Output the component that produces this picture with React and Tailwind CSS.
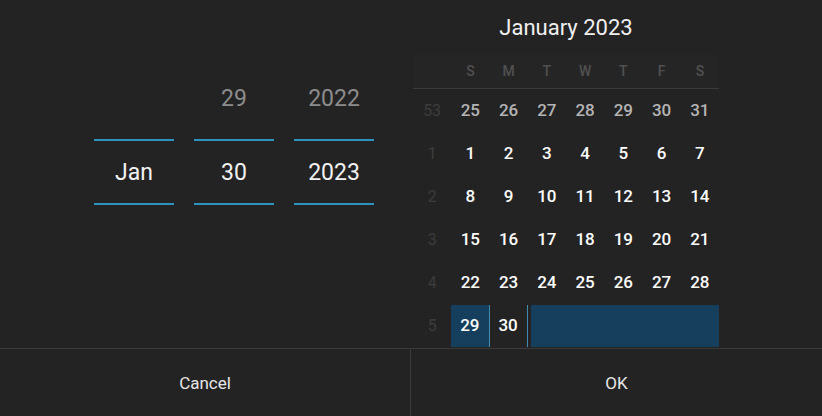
import React from "react";

const pickers = [
  { prev: "", value: "Jan" },
  { prev: "29", value: "30" },
  { prev: "2022", value: "2023" },
];

const weekDays = ["S", "M", "T", "W", "T", "F", "S"];

// each week: [week number, days...]; "muted" marks days of the previous month
const weeks = [
  { num: "53", days: ["25", "26", "27", "28", "29", "30", "31"], muted: true },
  { num: "1", days: ["1", "2", "3", "4", "5", "6", "7"] },
  { num: "2", days: ["8", "9", "10", "11", "12", "13", "14"] },
  { num: "3", days: ["15", "16", "17", "18", "19", "20", "21"] },
  { num: "4", days: ["22", "23", "24", "25", "26", "27", "28"] },
];

const Picker = ({ prev, value }) => (
  <div className="w-[80px] flex flex-col items-stretch pt-[77px]">
    <div className="h-[44px] flex items-center justify-center text-[23px] text-[#8c8c8c]">
      {prev}
    </div>
    <div className="h-[18px]"></div>
    <div className="h-[2px] bg-[#2f93c2]"></div>
    <div className="h-[62px] pt-[3px] flex items-center justify-center text-[23px] text-[#f2f2f2]">
      {value}
    </div>
    <div className="h-[2px] bg-[#2f93c2]"></div>
  </div>
);

const App = () => {
  return (
    <div
      className="w-[822px] h-[416px] bg-[#242324] flex flex-col overflow-hidden"
      style={{ fontFamily: "Roboto, 'Liberation Sans', sans-serif" }}
    >
      <div className="h-[348px] flex">
        {/* Spinner pickers */}
        <div className="w-[411px] flex gap-[20px] pl-[94px]">
          {pickers.map((p, i) => (
            <Picker key={i} prev={p.prev} value={p.value} />
          ))}
        </div>

        {/* Calendar */}
        <div className="w-[411px] pl-[2px]">
          <div className="w-[306px]">
            <div className="h-[55px] flex items-center justify-center text-[22px] text-[#f0f0f0]">
              January 2023
            </div>
            <div className="h-[34px] grid grid-cols-8 items-center border-b border-[#3a3a3a] bg-[#262526]">
              <div></div>
              {weekDays.map((d, i) => (
                <div
                  key={i}
                  className="text-center text-[14px] font-medium text-[#505050]"
                >
                  {d}
                </div>
              ))}
            </div>
            {weeks.map((w) => (
              <div key={w.num} className="h-[43px] grid grid-cols-8 items-center">
                <div className="text-center text-[16px] text-[#3c3c3c]">
                  {w.num}
                </div>
                {w.days.map((d) => (
                  <div
                    key={d}
                    className={`text-center text-[17px] font-medium ${
                      w.muted ? "text-[#b4b4b4]" : "text-white"
                    }`}
                  >
                    {d}
                  </div>
                ))}
              </div>
            ))}
            {/* last week: selected range */}
            <div className="h-[42px] mt-[1px] flex">
              <div className="w-[38.25px] flex items-center justify-center text-[16px] text-[#3c3c3c]">
                5
              </div>
              <div className="w-[38.25px] bg-[#163f5e] border-r border-[#3f8cad] flex items-center justify-center text-[17px] font-medium text-white">
                29
              </div>
              <div className="w-[38.25px] border-r border-[#3f8cad] flex items-center justify-center text-[17px] font-medium text-white">
                30
              </div>
              <div className="flex-1 ml-[3px] bg-[#163f5e]"></div>
            </div>
          </div>
        </div>
      </div>

      {/* Buttons */}
      <div className="flex-1 flex border-t border-[#3a3a3a]">
        <button className="w-[411px] border-r border-[#3a3a3a] pt-[2px] text-[17px] text-[#e6e6e6]">
          Cancel
        </button>
        <button className="flex-1 pt-[2px] text-[17px] text-[#e6e6e6]">OK</button>
      </div>
    </div>
  );
};

export default App;
